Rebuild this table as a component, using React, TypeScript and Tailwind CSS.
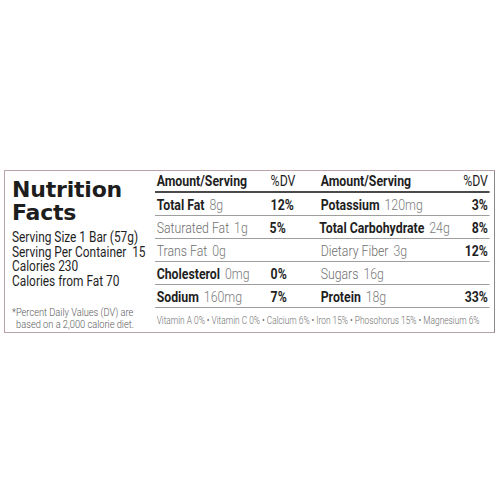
const roboto = { fontFamily: 'Roboto, "Liberation Sans", sans-serif' };

type Row = {
  l: string;
  la?: string;
  lbold: boolean;
  ldv?: string;
  r: string;
  ra?: string;
  rbold: boolean;
  rdv?: string;
};

const rows: Row[] = [
  { l: 'Total Fat', la: '8g', lbold: true, ldv: '12%', r: 'Potassium', ra: '120mg', rbold: true, rdv: '3%' },
  { l: 'Saturated Fat', la: '1g', lbold: false, ldv: '5%', r: 'Total Carbohydrate', ra: '24g', rbold: true, rdv: '8%' },
  { l: 'Trans Fat', la: '0g', lbold: false, r: 'Dietary Fiber', ra: '3g', rbold: false, rdv: '12%' },
  { l: 'Cholesterol', la: '0mg', lbold: true, ldv: '0%', r: 'Sugars', ra: '16g', rbold: false },
  { l: 'Sodium', la: '160mg', lbold: true, ldv: '7%', r: 'Protein', ra: '18g', rbold: true, rdv: '33%' },
];

function Label({ name, amount, bold }: { name: string; amount?: string; bold: boolean }) {
  return (
    <span className="whitespace-nowrap">
      <span className={bold ? 'font-bold text-[#1f1f1f]' : 'font-light text-[#6e6e6e]'}>{name}</span>
      {amount && <span className="font-light text-[#7a7a7a] ml-[6px]">{amount}</span>}
    </span>
  );
}

export default function App() {
  return (
    <div className="w-[500px] h-[500px] bg-white pt-[170px] pl-[4px]">
      <div className="w-[491px] h-[163px] border border-[#b9a3a8] border-r-[#8a8a8a] flex overflow-hidden">
        {/* left side */}
        <div className="w-[150px] shrink-0 pl-[7px] pt-[7px]">
          <h1
            className="text-[22px] leading-[23px] font-bold text-[#1d1d1d]"
            style={{ fontFamily: '"DejaVu Sans", sans-serif', letterSpacing: '-0.2px' }}
          >
            Nutrition
            <br />
            Facts
          </h1>
          <div className="w-[174px] origin-left scale-x-[0.82]" style={roboto}>
            <div className="mt-[7px] text-[14.5px] leading-[14.6px] text-[#1f1f1f] whitespace-nowrap">
              <div>Serving Size 1 Bar (57g)</div>
              <div>Serving Per Container&nbsp; 15</div>
              <div>Calories 230</div>
              <div>Calories from Fat 70</div>
            </div>
            <div className="mt-[18px] text-[11.3px] leading-[12px] text-[#5a5a5a] font-light whitespace-nowrap">
              <div>*Percent Daily Values (DV) are</div>
              <div className="pl-[5px]">based on a 2,000 calorie diet.</div>
            </div>
          </div>
        </div>

        {/* table */}
        <div className="w-[335px] shrink-0">
          <div className="w-[408px] origin-left scale-x-[0.82] text-[15px]" style={roboto}>
            <div className="flex items-center h-[22px] pt-[1px] border-b-2 border-[#4a4a4a] font-bold text-[#1f1f1f]">
              <div className="w-[141px] pl-[2px]">Amount/Serving</div>
              <div className="w-[59px] font-normal">%DV</div>
              <div className="flex-1 pl-[2px]">Amount/Serving</div>
              <div className="w-[49px] pr-[2px] text-right font-normal">%DV</div>
            </div>
            {rows.map((r) => (
              <div key={r.l} className="flex items-center h-[23px] pt-[2px] border-b border-[#9e9e9e]">
                <div className="w-[141px] pl-[2px]">
                  <Label name={r.l} amount={r.la} bold={r.lbold} />
                </div>
                <div className="w-[59px] font-bold text-[#1f1f1f]">{r.ldv}</div>
                <div className="flex-1 pl-[2px]">
                  <Label name={r.r} amount={r.ra} bold={r.rbold} />
                </div>
                <div className="w-[49px] pr-[2px] text-right font-bold text-[#1f1f1f]">{r.rdv}</div>
              </div>
            ))}
            <div className="pl-[2px] pt-[5px] text-[10.2px] font-light text-[#6e6e6e] whitespace-nowrap">
              Vitamin A 0% • Vitamin C 0% • Calcium 6% • Iron 15% • Phosohorus 15% • Magnesium 6%
            </div>
          </div>
        </div>
      </div>
    </div>
  );
}
